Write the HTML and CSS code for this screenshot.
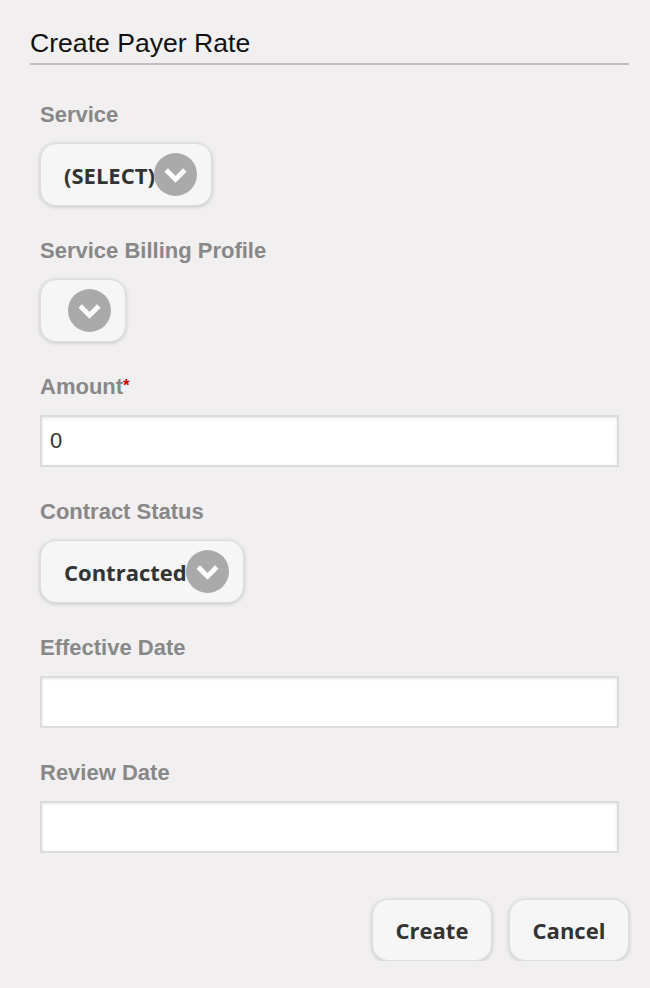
FILE: index.html
```html
<!DOCTYPE html>
<html lang="en">

<head>
    <meta charset="UTF-8">
    <meta name="viewport" content="width=device-width, initial-scale=1.0">
    <title>Create Payer Rate</title>
    <link rel="stylesheet" href="styles.css">
</head>

<body>
    <div class="dialog">
        <h1 class="dialog-title">Create Payer Rate</h1>

        <form id="payerRateForm" class="rate-form">
            <div class="field">
                <label class="field-label">Service</label>
                <button type="button" class="select-btn">
                    <span>(SELECT)</span>
                    <svg class="chevron" viewBox="0 0 44 44"><circle cx="22" cy="22" r="22" fill="#aaa"/><polyline points="12.5,17.5 22,27 31.5,17.5" fill="none" stroke="#fff" stroke-width="5"/></svg>
                </button>
            </div>

            <div class="field">
                <label class="field-label">Service Billing Profile</label>
                <button type="button" class="select-btn select-empty">
                    <svg class="chevron" viewBox="0 0 44 44"><circle cx="22" cy="22" r="22" fill="#aaa"/><polyline points="12.5,17.5 22,27 31.5,17.5" fill="none" stroke="#fff" stroke-width="5"/></svg>
                </button>
            </div>

            <div class="field">
                <label class="field-label" for="amount">Amount<span class="required">*</span></label>
                <input type="text" id="amount" class="text-input" value="0">
            </div>

            <div class="field">
                <label class="field-label">Contract Status</label>
                <button type="button" class="select-btn">
                    <span>Contracted</span>
                    <svg class="chevron" viewBox="0 0 44 44"><circle cx="22" cy="22" r="22" fill="#aaa"/><polyline points="12.5,17.5 22,27 31.5,17.5" fill="none" stroke="#fff" stroke-width="5"/></svg>
                </button>
            </div>

            <div class="field">
                <label class="field-label" for="effective">Effective Date</label>
                <input type="text" id="effective" class="text-input">
            </div>

            <div class="field">
                <label class="field-label" for="review">Review Date</label>
                <input type="text" id="review" class="text-input">
            </div>
        </form>

        <div class="actions">
            <button type="button" class="action-btn">Create</button>
            <button type="button" class="action-btn">Cancel</button>
        </div>
    </div>
</body>

</html>
```

FILE: styles.css
```css
body {
    margin: 0;
    background: #f1eff0;
    font-family: "Liberation Sans", Arial, sans-serif;
}

.dialog {
    padding: 28px 21px 0 30px;
}

.dialog-title {
    margin: 0;
    padding-bottom: 5px;
    font-size: 26.6px;
    font-weight: normal;
    line-height: 30px;
    color: #111;
    border-bottom: 2px solid #c0bebf;
}

.rate-form {
    display: flex;
    flex-direction: column;
    gap: 32px;
    padding: 37px 10px 0 10px;
}

.field {
    display: flex;
    flex-direction: column;
    align-items: flex-start;
    gap: 15px;
}

.field-label {
    font-size: 22px;
    font-weight: bold;
    line-height: 26px;
    color: #888;
}

.required {
    color: #d40000;
    font-size: 17px;
    vertical-align: top;
    line-height: 24px;
}

.select-btn {
    display: inline-flex;
    align-items: center;
    height: 63px;
    box-sizing: border-box;
    padding: 0 14px 0 23px;
    background: #f6f6f6;
    border: 1px solid #dedede;
    border-radius: 16px;
    box-shadow: 0 1px 4px rgba(0, 0, 0, 0.18);
    font-family: "Open Sans", sans-serif;
    font-size: 22px;
    font-weight: bold;
    color: #333;
}

.select-empty {
    padding-left: 28px;
}

.chevron {
    width: 43px;
    height: 43px;
    margin-left: -1px;
}

.text-input {
    width: 100%;
    height: 52px;
    box-sizing: border-box;
    margin: 0;
    padding: 0 8px;
    border: 2px solid #dcdcdc;
    background: #fff;
    box-shadow: inset 0 1px 3px rgba(0, 0, 0, 0.1);
    font-family: "Liberation Sans", Arial, sans-serif;
    font-size: 22px;
    color: #333;
}

.actions {
    display: flex;
    justify-content: flex-end;
    gap: 17px;
    margin-top: 46px;
}

.action-btn {
    height: 62px;
    width: 120px;
    background: #f6f6f6;
    border: 1px solid #dedede;
    border-radius: 16px;
    box-shadow: 0 1px 4px rgba(0, 0, 0, 0.18);
    font-family: "Open Sans", sans-serif;
    font-size: 22px;
    font-weight: bold;
    color: #333;
    cursor: pointer;
}
```
